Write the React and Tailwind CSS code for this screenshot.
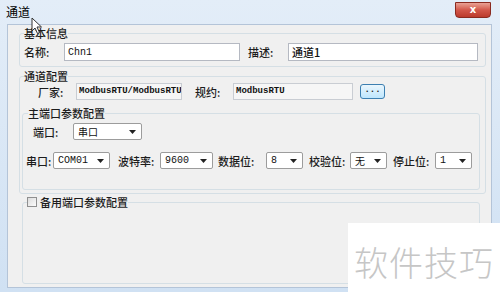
import React from 'react';

const cjk = { fontFamily: '"Noto Sans CJK SC", "Noto Sans", sans-serif' };
const mono = { fontFamily: '"Liberation Mono", "DejaVu Sans Mono", monospace' };

function Select({ value, width }) {
  return (
    <div
      className={`${width} h-[17px] flex items-center justify-between bg-white border border-[#9c9c9c] rounded-[2px] pl-[4px] pr-[3px]`}
    >
      <span className="text-[10px] leading-none text-[#111]" style={value.match(/[a-zA-Z0-9]/) ? mono : cjk}>
        {value}
      </span>
      <span className="w-[11px] h-[11px] flex items-center justify-center">
        <svg width="7" height="4" viewBox="0 0 7 4">
          <path d="M0 0 L7 0 L3.5 4 Z" fill="#222" />
        </svg>
      </span>
    </div>
  );
}

function Label({ children, className }) {
  return (
    <span className={`text-[11px] leading-[14px] text-[#1c1c1c] font-medium ${className}`} style={cjk}>
      {children}
    </span>
  );
}

export default function App() {
  return (
    <div className="w-[500px] h-[298px] bg-white relative overflow-hidden">
      {/* window */}
      <div className="h-[292px] flex flex-col bg-gradient-to-b from-[#e3edf8] to-[#d0e1f3]">
        {/* title bar */}
        <div className="h-[24px] flex items-start justify-between pl-[6px] pr-[9px]">
          <span className="text-[12px] leading-[14px] mt-[5px] text-black" style={cjk}>通道</span>
          <div className="w-[36px] h-[16px] mt-[2px] flex items-center justify-center rounded-b-[4px] border border-[#8a2a20] bg-gradient-to-b from-[#e8a195] via-[#d2574a] to-[#bb3a2c]">
            <span className="text-white text-[10px] font-bold leading-none" style={{ fontFamily: '"DejaVu Sans", sans-serif' }}>x</span>
          </div>
        </div>

        {/* body */}
        <div className="ml-[7px] w-[485px] h-[264px] bg-[#f0f0f0] border border-[#b4c4d8] pl-[11px] pr-[5px] pt-[1px]">
          {/* 基本信息 */}
          <fieldset className="border border-[#d5dfe5] rounded-[3px] px-[4px] pb-[5px]">
            <legend className="text-[11px] leading-[14px] font-medium text-[#1c1c1c]" style={cjk}>基本信息</legend>
            <div className="flex items-center pt-[3px]">
              <Label className="w-[40px]">名称:</Label>
              <div className="w-[176px] h-[18px] bg-white border border-[#b5b9c2] flex items-center pl-[3px]">
                <span className="text-[10px] text-[#111]" style={mono}>Chn1</span>
              </div>
              <Label className="ml-[8px] w-[40px]">描述:</Label>
              <div className="w-[190px] h-[18px] bg-white border border-[#b5b9c2] flex items-center pl-[3px]">
                <span className="text-[11px] text-[#111] font-medium" style={cjk}>通道1</span>
              </div>
            </div>
          </fieldset>

          {/* 通道配置 */}
          <fieldset className="mt-[2px] border border-[#d5dfe5] rounded-[3px] pl-[2px] pr-[5px] pb-[3px]">
            <legend className="ml-[2px] text-[11px] leading-[14px] font-medium text-[#1c1c1c]" style={cjk}>通道配置</legend>
            <div className="flex items-center h-[17px]">
              <Label className="ml-[16px] w-[38px]">厂家:</Label>
              <div className="w-[106px] h-[17px] bg-[#f6f6f6] border border-[#c9cdd3] flex items-center pl-[2px] overflow-hidden">
                <span className="text-[9px] text-[#111] font-semibold whitespace-nowrap" style={mono}>ModbusRTU/ModbusRTU</span>
              </div>
              <Label className="ml-[13px] w-[38px]">规约:</Label>
              <div className="w-[120px] h-[17px] bg-[#f6f6f6] border border-[#c9cdd3] flex items-center pl-[2px]">
                <span className="text-[9px] text-[#111] font-semibold" style={mono}>ModbusRTU</span>
              </div>
              <div className="ml-[7px] w-[25px] h-[15px] rounded-[3px] border border-[#3c7fb1] bg-gradient-to-b from-[#eaf6fd] to-[#bee6fd] flex items-center justify-center">
                <span className="text-[9px] leading-none text-[#222] font-bold -mt-[3px]" style={mono}>...</span>
              </div>
            </div>

            {/* 主端口参数配置 */}
            <fieldset className="mt-[6px] border border-[#d5dfe5] rounded-[3px] px-[3px] pb-[20px]">
              <legend className="ml-[2px] text-[11px] leading-[14px] font-medium text-[#1c1c1c]" style={cjk}>主端口参数配置</legend>
              <div className="flex items-center pt-[3px]">
                <Label className="ml-[7px] w-[40px]">端口:</Label>
                <Select value="串口" width="w-[69px]" />
              </div>
              <div className="flex items-center mt-[12px]">
                <Label className="w-[27px]">串口:</Label>
                <Select value="COM01" width="w-[57px]" />
                <Label className="ml-[8px] w-[42px]">波特率:</Label>
                <Select value="9600" width="w-[53px]" />
                <Label className="ml-[5px] w-[48px]">数据位:</Label>
                <Select value="8" width="w-[37px]" />
                <Label className="ml-[6px] w-[41px]">校验位:</Label>
                <Select value="无" width="w-[37px]" />
                <Label className="ml-[6px] w-[42px]">停止位:</Label>
                <Select value="1" width="w-[37px]" />
              </div>
            </fieldset>
          </fieldset>

          {/* 备用端口参数配置 */}
          <fieldset className="mt-[1px] ml-[3px] mr-[6px] h-[89px] border border-[#d5dfe5] rounded-[3px] px-[4px]">
            <legend className="flex items-center">
              <span className="w-[10px] h-[10px] border border-[#8f8f8f] bg-gradient-to-br from-[#dcdcdc] to-[#fbfbfb]" />
              <span className="ml-[3px] text-[11px] leading-[14px] font-medium text-[#1c1c1c]" style={cjk}>备用端口参数配置</span>
            </legend>
          </fieldset>
        </div>
      </div>

      {/* mouse pointer */}
      <svg className="absolute left-[31px] top-[17px]" width="12" height="18" viewBox="0 0 12 18">
        <path d="M1 1 L1 14 L4 11 L6.5 16.5 L8.5 15.5 L6 10 L10.5 10 Z" fill="#fff" stroke="#333" strokeWidth="1" strokeLinejoin="round" />
      </svg>

      {/* watermark */}
      <div className="absolute left-[348px] top-[223px] w-[152px] h-[75px] bg-white flex items-center justify-center">
        <span className="text-[34px] leading-none text-[#c6c6c6] font-light tracking-[1px] mt-[2px]" style={cjk}>软件技巧</span>
      </div>
    </div>
  );
}
